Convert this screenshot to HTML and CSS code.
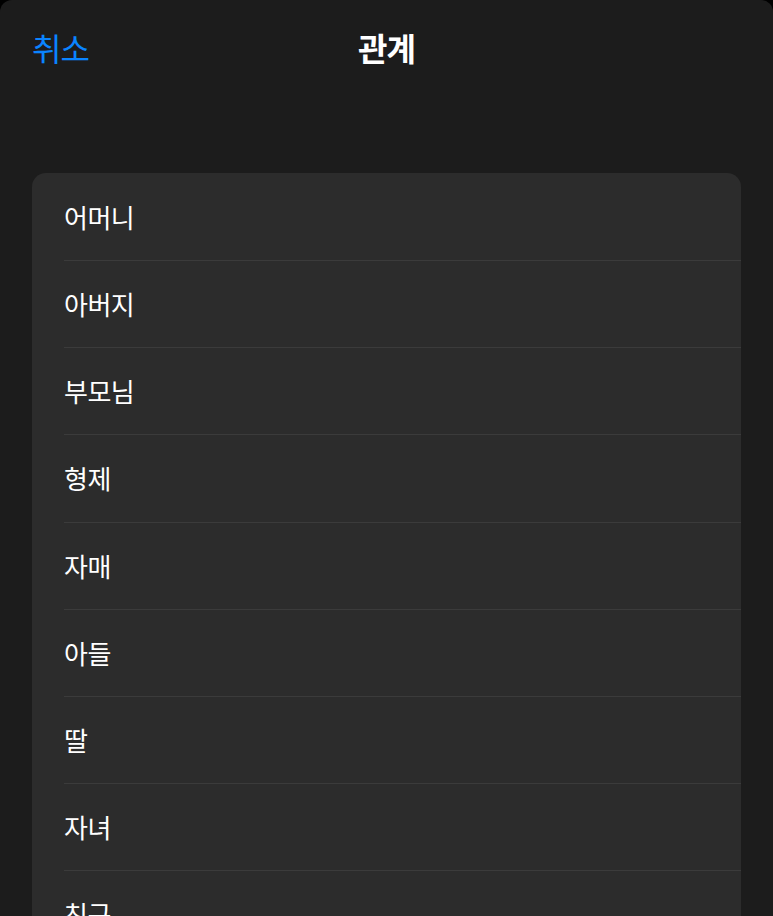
FILE: index.html
```html
<!DOCTYPE html>
<html lang="ko">
  <head>
    <meta charset="utf-8" />
    <title>관계</title>
    <link rel="stylesheet" href="styles.css">
  </head>
  <body>
    <div class="sheet">
      <header class="nav">
        <span class="cancel">취소</span>
        <h1 class="title">관계</h1>
      </header>

      <ul class="list">
        <li>어머니</li>
        <li>아버지</li>
        <li>부모님</li>
        <li>형제</li>
        <li>자매</li>
        <li>아들</li>
        <li>딸</li>
        <li>자녀</li>
        <li>친구</li>
        <li>배우자</li>
      </ul>
    </div>
  </body>
</html>
```

FILE: styles.css
```css
/* 기본 */
html,
body {
  margin: 0;
  height: 100%;
  background: #000;
  overflow: hidden;
}
body {
  font-family: "Noto Sans CJK KR", "Noto Sans", sans-serif;
  color: #fff;
}

/* 시트 */
.sheet {
  height: 100%;
  background: #1c1c1c;
  border-radius: 12px 12px 0 0;
  padding: 0 32px;
}

/* 상단 바 */
.nav {
  position: relative;
  height: 94px;
  display: flex;
  align-items: center;
}
.cancel {
  font-size: 32px;
  color: #0a84ff;
  letter-spacing: -1px;
}
.title {
  position: absolute;
  left: 0;
  right: 0;
  margin: 0;
  text-align: center;
  font-size: 32px;
  font-weight: 700;
  letter-spacing: -1px;
  pointer-events: none;
}

/* 목록 */
.list {
  list-style: none;
  margin: 79px 0 0;
  padding: 1px 0 0 32px;
  background: #2c2c2c;
  border-radius: 14px;
}
.list li {
  box-sizing: border-box;
  height: 87.15px;
  line-height: 86px;
  font-size: 26px;
  letter-spacing: -0.5px;
  border-bottom: 1px solid #3b3b3b;
}
```
